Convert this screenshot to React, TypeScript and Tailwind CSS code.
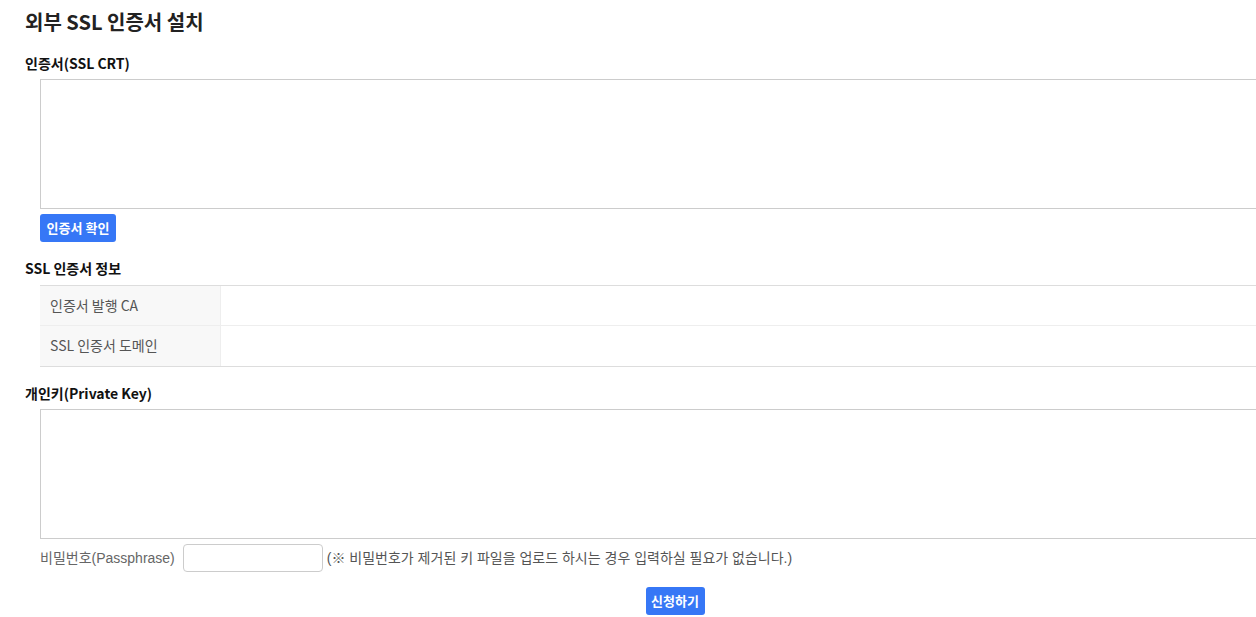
import React from "react";

const kr = { fontFamily: '"Noto Sans CJK KR", "Noto Sans", sans-serif' };
const mixed = { fontFamily: '"Liberation Sans", "Noto Sans CJK KR", sans-serif' };

export default function App() {
  return (
    <div className="w-full overflow-hidden bg-white" style={kr}>
      <div className="w-[1325px] pl-[25px] pb-[3px]">
        <h1 className="mt-[7px] text-[20px] leading-[30px] font-bold text-[#222]">외부 SSL 인증서 설치</h1>

        <h2 className="mt-[16px] text-[14px] leading-[20px] font-bold text-[#111]">인증서(SSL CRT)</h2>
        <div className="ml-[15px] mt-[6px]">
          <textarea className="block w-[1285px] h-[130px] border border-[#ccc] bg-white resize-none outline-none" />
          <button className="mt-[5px] h-[28px] w-[76px] rounded-[3px] bg-[#3677f6] text-white text-[13px] font-bold leading-[28px]">
            인증서 확인
          </button>
        </div>

        <h2 className="mt-[16px] text-[14px] leading-[20px] font-bold text-[#111]">SSL 인증서 정보</h2>
        <div className="ml-[15px] mt-[7px] border-t border-b border-[#ddd]">
          <div className="flex h-[40px] border-b border-[#eee]">
            <div className="w-[181px] shrink-0 bg-[#f8f8f8] border-r border-[#eee] pl-[10px] text-[14px] leading-[39px] text-[#555]">
              인증서 발행 CA
            </div>
            <div className="flex-1" />
          </div>
          <div className="flex h-[40px]">
            <div className="w-[181px] shrink-0 bg-[#f8f8f8] border-r border-[#eee] pl-[10px] text-[14px] leading-[39px] text-[#555]">
              SSL 인증서 도메인
            </div>
            <div className="flex-1" />
          </div>
        </div>

        <h2 className="mt-[16px] text-[14px] leading-[20px] font-bold text-[#111]">개인키(Private Key)</h2>
        <div className="ml-[15px] mt-[6px]">
          <textarea className="block w-[1285px] h-[130px] border border-[#ccc] bg-white resize-none outline-none" />
          <div className="mt-[5px] flex items-center h-[28px] text-[14px] text-[#666]" style={mixed}>
            <span>비밀번호(Passphrase)</span>
            <input type="password" className="ml-[8px] h-[28px] w-[140px] rounded-[4px] border border-[#ccc] bg-white outline-none" />
            <span className="ml-[4px] text-[#555]">(※ 비밀번호가 제거된 키 파일을 업로드 하시는 경우 입력하실 필요가 없습니다.)</span>
          </div>
        </div>

        <div className="mt-[15px] flex justify-center">
          <button className="h-[28px] w-[59px] rounded-[3px] bg-[#3677f6] text-white text-[13px] font-bold leading-[28px]">
            신청하기
          </button>
        </div>
      </div>
    </div>
  );
}
